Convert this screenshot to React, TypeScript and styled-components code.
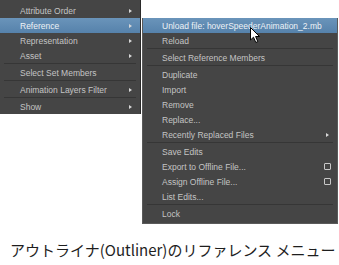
import React from "react";
import styled, { createGlobalStyle } from "styled-components";

type Entry =
  | { label: string; sub?: boolean; option?: boolean; active?: boolean }
  | "sep";

const leftItems: Entry[] = [
  { label: "Attribute Order", sub: true },
  { label: "Reference", sub: true, active: true },
  { label: "Representation", sub: true },
  { label: "Asset", sub: true },
  "sep",
  { label: "Select Set Members" },
  "sep",
  { label: "Animation Layers Filter", sub: true },
  "sep",
  { label: "Show", sub: true },
];

const rightItems: Entry[] = [
  { label: "Unload file: hoverSpeederAnimation_2.mb", active: true },
  { label: "Reload" },
  "sep",
  { label: "Select Reference Members" },
  "sep",
  { label: "Duplicate" },
  { label: "Import" },
  { label: "Remove" },
  { label: "Replace..." },
  { label: "Recently Replaced Files", sub: true },
  "sep",
  { label: "Save Edits" },
  { label: "Export to Offline File...", option: true },
  { label: "Assign Offline File...", option: true },
  { label: "List Edits..." },
  "sep",
  { label: "Lock" },
];

const GlobalStyle = createGlobalStyle`
  body {
    margin: 0;
    background: #ffffff;
  }
`;

const MenuList = ({ items, inset }: { items: Entry[]; inset: number }) => (
  <>
    {items.map((item, i) =>
      item === "sep" ? (
        <Separator key={i} />
      ) : (
        <Item key={i} active={item.active} pad={inset}>
          <Label active={item.active}>{item.label}</Label>
          {item.sub && <Arrow />}
          {item.option && <OptionBox />}
        </Item>
      )
    )}
  </>
);

const App = () => {
  return (
    <Page>
      <GlobalStyle />
      <Menus>
        <LeftMenu>
          <MenuList items={leftItems} inset={20} />
        </LeftMenu>
        <SubMenu>
          <MenuList items={rightItems} inset={19} />
          <Cursor width="11" height="17" viewBox="0 0 11 17">
            <path
              d="M0.5 0.5 L0.5 13 L3.5 10.2 L5.8 15.5 L7.8 14.6 L5.6 9.5 L9.5 9.5 Z"
              fill="#ffffff"
              stroke="#000000"
              strokeWidth="1"
              strokeLinejoin="round"
            />
          </Cursor>
        </SubMenu>
      </Menus>
      <Caption>アウトライナ(Outliner)のリファレンス メニュー</Caption>
    </Page>
  );
};

export default App;

const Page = styled.div`
  width: 339px;
  height: 265px;
  display: flex;
  flex-direction: column;
  overflow: hidden;
  background: #ffffff;
`;

const Menus = styled.div`
  display: flex;
  align-items: flex-start;
`;

const LeftMenu = styled.div`
  width: 140px;
  padding: 3px 0 0;
  background: #454545;
  border-right: 1px solid #2a2a2a;
  display: flex;
  flex-direction: column;
`;

const SubMenu = styled.div`
  position: relative;
  margin-top: 18px;
  margin-left: 1px;
  width: 194px;
  padding: 0 0 2px;
  background: #454545;
  border: 1px solid #5a5a5a;
  border-top: none;
  display: flex;
  flex-direction: column;
`;

const Item = styled.div<{ active?: boolean; pad: number }>`
  height: 15px;
  display: flex;
  align-items: center;
  padding: 0 5px 0 ${({ pad }) => pad}px;
  background: ${({ active }) =>
    active ? "linear-gradient(to bottom, #6a94ba, #5682ab)" : "transparent"};
`;

const Label = styled.span<{ active?: boolean }>`
  flex: 1;
  font-family: "Liberation Sans", Arial, sans-serif;
  font-size: 8.5px;
  color: ${({ active }) => (active ? "#eef2f6" : "#c4c4c4")};
  white-space: nowrap;
`;

const Arrow = styled.span`
  width: 0;
  height: 0;
  margin-right: 3px;
  border-top: 2.5px solid transparent;
  border-bottom: 2.5px solid transparent;
  border-left: 3px solid #d8d8d8;
`;

const OptionBox = styled.span`
  width: 5px;
  height: 5px;
  margin-right: 1px;
  border: 1px solid #c8c8c8;
  border-radius: 1px;
`;

const Separator = styled.div`
  height: 1px;
  margin: 0 4px 1px;
  background: #363636;
`;

const Cursor = styled.svg`
  position: absolute;
  left: 107px;
  top: 9px;
`;

const Caption = styled.div`
  margin-top: 15px;
  padding-left: 10px;
  font-family: "Noto Sans CJK JP", "Noto Sans", sans-serif;
  font-size: 15px;
  line-height: 22px;
  color: #1e1e1e;
  white-space: nowrap;
`;
